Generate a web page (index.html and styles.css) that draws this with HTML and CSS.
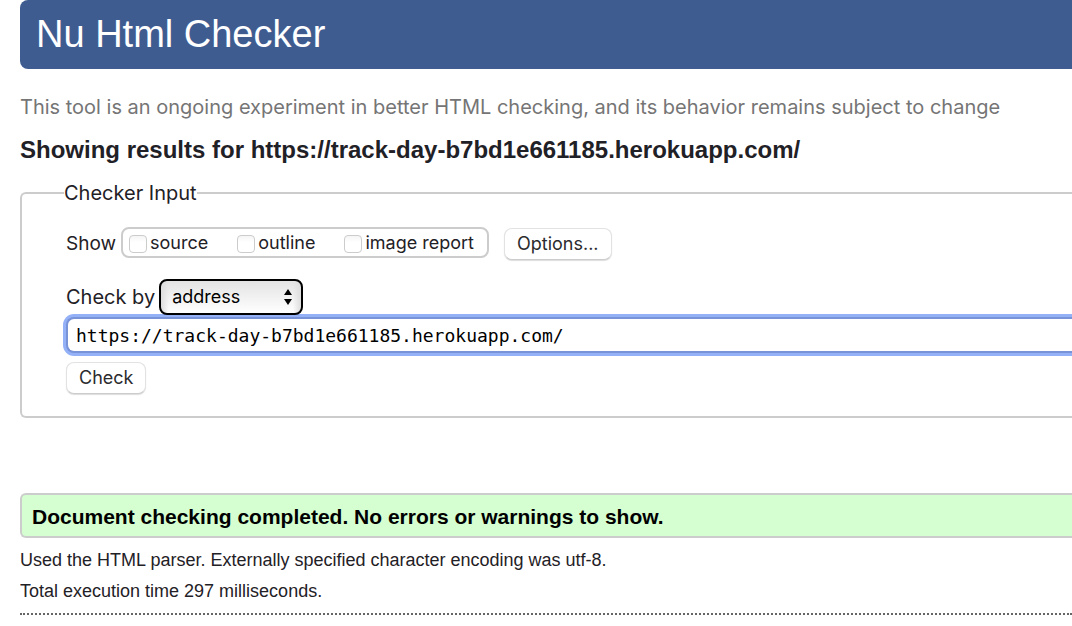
FILE: index.html
```html
<!DOCTYPE html>
<html lang="en">
<head>
<meta charset="utf-8">
<title>Nu Html Checker</title>
<link rel="stylesheet" href="styles.css">
</head>
<body>
<header class="banner"><h1 class="banner-title">Nu Html Checker</h1></header>
<main class="page">
  <p class="tagline">This tool is an ongoing experiment in better HTML checking, and its behavior remains subject to change</p>
  <h2 class="results-title">Showing results for https://track-day-b7bd1e661185.herokuapp.com/</h2>
  <form class="checker">
    <fieldset class="checker-fields">
      <legend class="checker-legend">Checker Input</legend>
      <div class="show-row">
        <span class="show-label" id="show-label">Show</span>
        <div class="show-options" role="group" aria-labelledby="show-label">
          <label class="option"><input class="tick" type="checkbox">source</label>
          <label class="option"><input class="tick" type="checkbox">outline</label>
          <label class="option"><input class="tick" type="checkbox">image report</label>
        </div>
        <button class="button options-button" type="button">Options...</button>
      </div>
      <div class="method-row">
        <label class="method-label" for="method">Check by</label>
        <span class="select-wrap">
          <select class="method" id="method"><option>address</option></select>
          <svg class="select-arrows" viewBox="0 0 8 16" aria-hidden="true"><path d="M4 0L8 6H0zM4 16L8 10H0z"/></svg>
        </span>
      </div>
      <input class="address" type="text" aria-label="Address" value="https://track-day-b7bd1e661185.herokuapp.com/">
      <button class="button" type="submit">Check</button>
    </fieldset>
  </form>
  <section class="results">
    <p class="success">Document checking completed. No errors or warnings to show.</p>
    <p class="detail">Used the HTML parser. Externally specified character encoding was utf-8.</p>
    <p class="detail">Total execution time 297 milliseconds.</p>
    <hr class="divider">
  </section>
</main>
</body>
</html>
```
FILE: styles.css
```css
* {
  box-sizing: border-box;
}

body {
  margin: 0 0 0 20px;
  background: #fff;
  color: #1f2126;
  font-family: Inter, "Liberation Sans", sans-serif;
  font-size: 18px;
  line-height: 24px;
}

.banner {
  padding: 10px 16px 11px;
  background: #3f5c91;
  border-radius: 8px 0 0 8px;
  color: #fff;
}

.banner-title {
  margin: 0;
  font: 38px/48px "Liberation Sans", Arial, sans-serif;
}

.tagline {
  margin: 26px 0 0;
  color: #757575;
  font-size: 20px;
}

.results-title {
  margin: 17px 0 0;
  font: bold 24px/28px "Liberation Sans", Arial, sans-serif;
}

.checker {
  margin-top: 17px;
}

.checker-fields {
  min-width: 0;
  margin: 0;
  padding: 22px 0 22px 44px;
  border: 2px solid #ccc;
  border-right: 0;
  border-radius: 6px 0 0 6px;
}

.checker-legend {
  margin-left: -2px;
  padding: 0;
  font-size: 20px;
}

.show-row,
.show-options,
.option,
.method-row {
  display: flex;
  align-items: center;
}

.show-label {
  margin-right: 5px;
  font-size: 19px;
}

.show-options {
  gap: 29px;
  height: 31px;
  margin-bottom: 2px;
  padding: 0 13px 0 6px;
  border: 2px solid #ccc;
  border-radius: 8px;
}

.option {
  gap: 3px;
}

.tick {
  appearance: none;
  width: 18px;
  height: 18px;
  margin: 3px 0 0;
  border: 1px solid #ccc;
  border-radius: 4px;
  background: linear-gradient(#f5f5f5, #fff 40%);
}

.button {
  display: block;
  height: 32px;
  padding: 0 12px;
  border: 1px solid #e2e2e2;
  border-bottom-color: #ccc;
  border-radius: 8px;
  background: #fff;
  box-shadow: 0 1px 1px #ddd;
  color: #2b2b2e;
  font: inherit;
}

.options-button {
  margin-left: 15px;
}

.method-row {
  gap: 4px;
  margin-top: 19px;
}

.method-label {
  font-size: 20px;
}

.select-wrap {
  position: relative;
}

.method {
  appearance: none;
  display: block;
  width: 144px;
  height: 36px;
  padding: 0 11px;
  border: 2px solid #000;
  border-radius: 8px;
  background: linear-gradient(to right, #ddd, transparent 8px, transparent calc(100% - 8px), #ddd), linear-gradient(#e3e3e3, #fff);
  color: #000;
  font: inherit;
}

.select-arrows {
  position: absolute;
  top: 10px;
  right: 11px;
  width: 8px;
  height: 16px;
  pointer-events: none;
}

.address {
  display: block;
  width: 100%;
  height: 36px;
  margin: 2px 0 9px;
  padding: 0 8px;
  border: 2px solid #7893d8;
  border-right: 0;
  border-radius: 8px 0 0 8px;
  outline: 0;
  background: #fff;
  box-shadow: 0 0 0 3px #94b1f7;
  color: #000;
  font: 18px/24px "DejaVu Sans Mono", monospace;
}

.results {
  margin-top: 75px;
  font-family: "Liberation Sans", Arial, sans-serif;
}

.success {
  margin: 0 0 10px;
  padding: 10px 10px 7px;
  border: 2px solid #ccc;
  border-right: 0;
  border-radius: 6px 0 0 6px;
  background: #d5ffd0;
  color: #000;
  font-size: 21px;
  font-weight: bold;
}

.detail {
  margin: 0 0 7px;
}

.divider {
  margin: 10px 0 0;
  border: 0;
  border-top: 2px dotted #666;
}
```
